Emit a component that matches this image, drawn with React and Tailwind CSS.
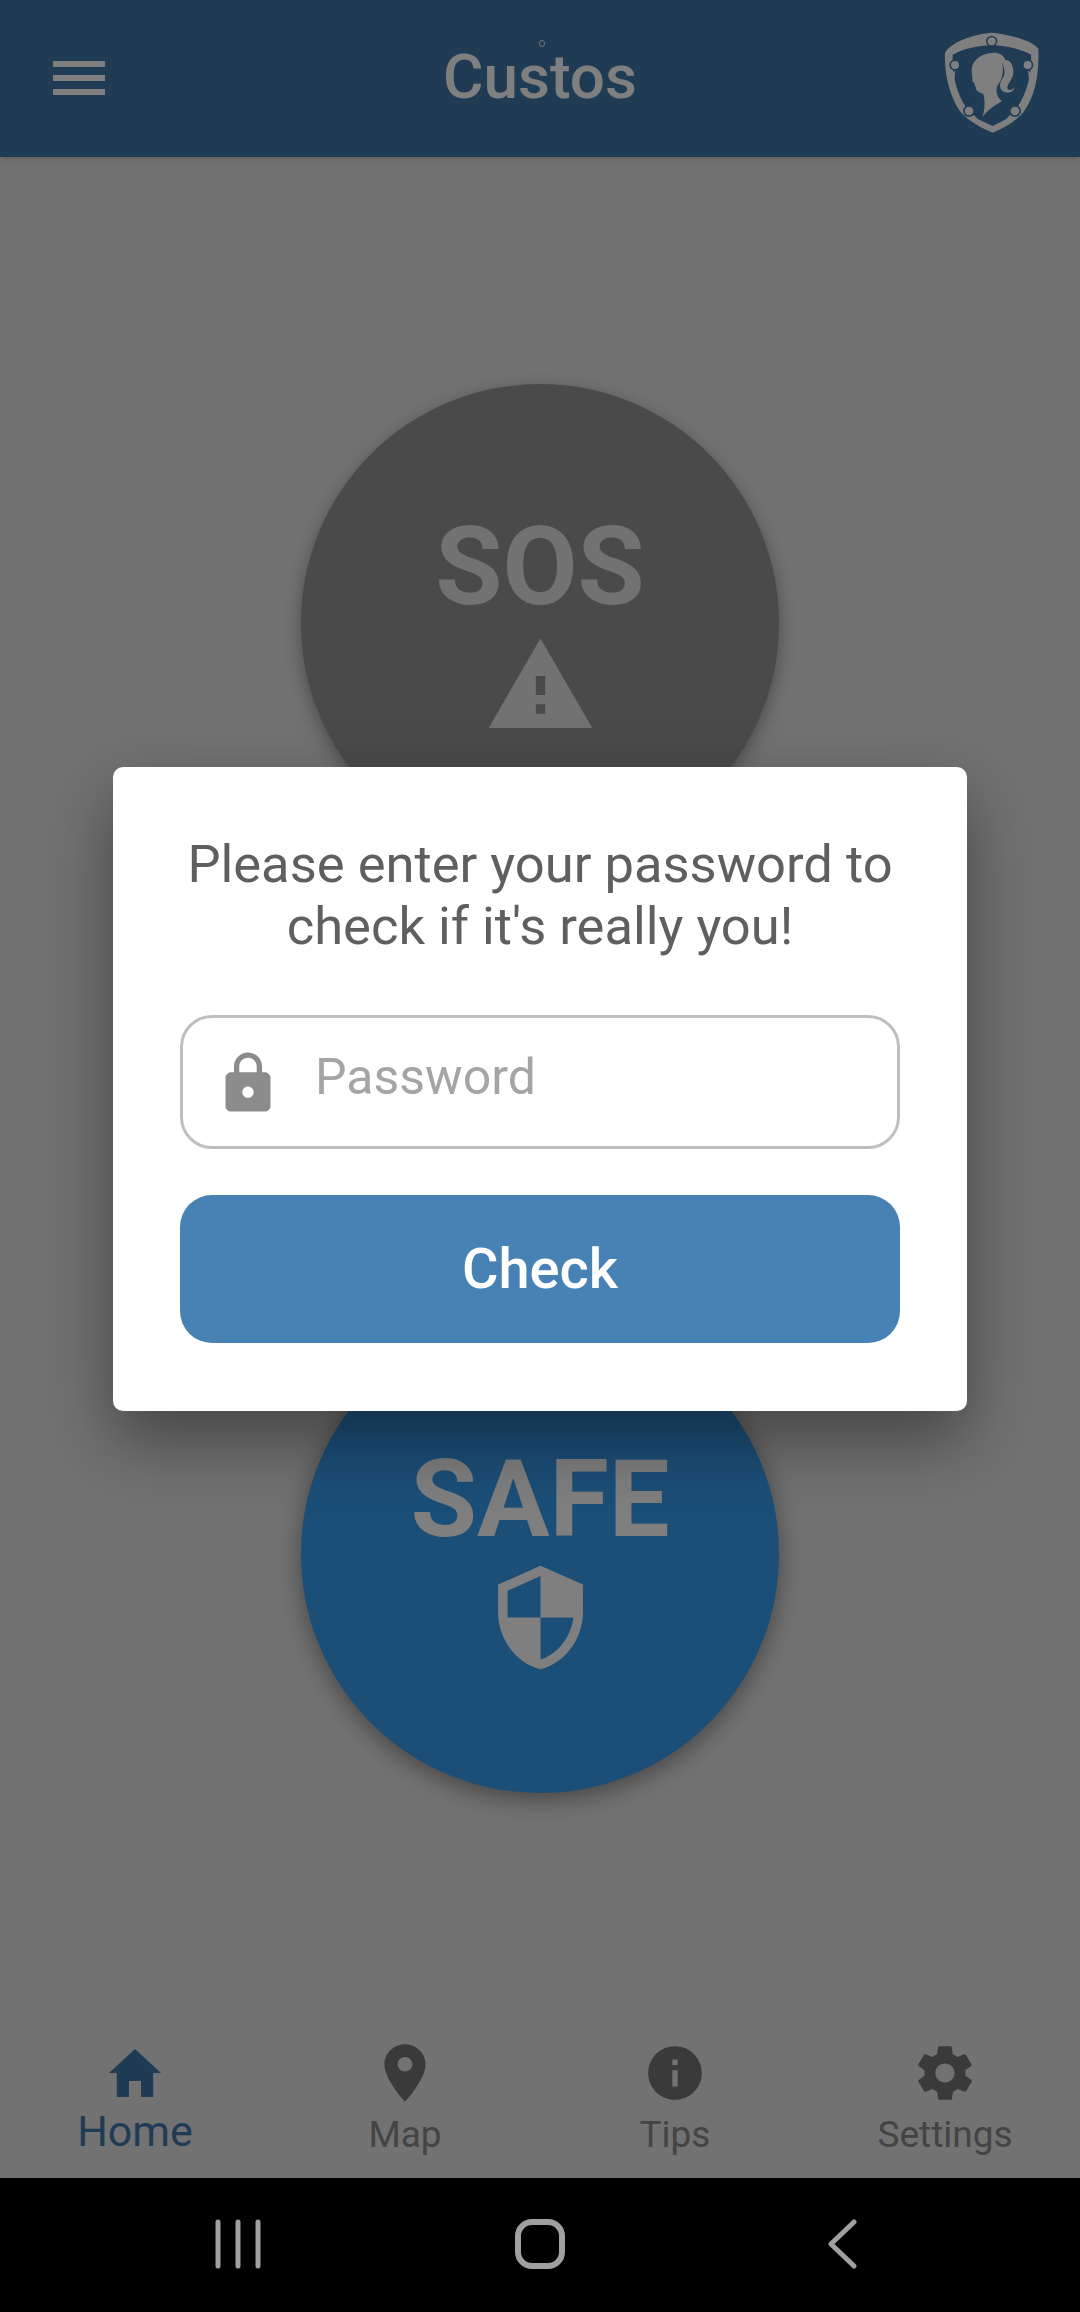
import { IoMdHome, IoMdPin, IoMdInformationCircle, IoMdSettings, IoMdLock } from "react-icons/io";
import { MdWarning, MdSecurity } from "react-icons/md";

function CustosLogo({ className }) {
  return (
    <svg viewBox="0 0 450 390" className={className} fill="#ffffff">
      {/* shield frame */}
      <path
        fillRule="evenodd"
        d="M75 118 C 85 90 150 62 215 56 C 280 62 345 85 355 105 C 358 180 345 250 310 295 C 285 325 245 345 218 356 C 190 345 150 325 122 295 C 90 250 72 180 75 118 Z M98 122 C 135 102 180 94 215 94 C 250 94 295 102 333 122 C 335 180 322 235 292 280 L 258 316 L 218 336 L 174 316 L 138 280 C 108 235 96 180 98 122 Z"
      />
      <path d="M88 190 L 106 168 L 102 205 Z M342 190 L 324 168 L 328 205 Z M118 82 L 192 74 L 118 102 Z M312 82 L 238 74 L 312 102 Z" />
      <circle cx="215" cy="82" r="17" fill="#4078aa" />
      <circle cx="215" cy="82" r="12" />
      <circle cx="105" cy="153" r="17" fill="#4078aa" />
      <circle cx="105" cy="153" r="12" />
      <circle cx="323" cy="153" r="17" fill="#4078aa" />
      <circle cx="323" cy="153" r="12" />
      <circle cx="147" cy="291" r="18" fill="#4078aa" />
      <circle cx="147" cy="291" r="13" />
      <circle cx="285" cy="291" r="18" fill="#4078aa" />
      <circle cx="285" cy="291" r="13" />
      {/* girl silhouette */}
      <path d="M156 160 C 160 135 190 115 225 116 C 240 117 252 125 256 138 C 268 136 278 150 280 170 C 282 195 262 205 262 222 C 266 232 278 228 283 220 C 282 236 262 240 248 232 C 236 222 238 205 250 190 C 256 178 254 160 246 146 C 254 175 244 200 232 215 C 226 232 232 250 246 262 C 232 270 212 280 188 308 C 194 284 196 262 190 240 C 180 236 170 232 168 224 C 168 218 162 214 164 208 C 160 204 154 200 158 194 C 156 184 154 172 156 160 Z" />
    </svg>
  );
}

function NavItem({ icon: Icon, label, active, iconClass }) {
  return (
    <div className={`flex-1 flex flex-col items-center ${active ? "text-[#4078aa]" : "text-[#747474]"}`}>
      <div className="h-[66px] flex items-center justify-center">
        <Icon className={iconClass} />
      </div>
      <span
        className={
          active
            ? "text-[43px] leading-[50px] text-[#4078aa]"
            : "text-[37px] leading-[44px] mt-[7px] text-[#888888]"
        }
      >
        {label}
      </span>
    </div>
  );
}

export default function App() {
  return (
    <div className="relative w-[1080px] h-[2312px] flex flex-col overflow-hidden bg-black font-['Roboto',sans-serif]">
      {/* Header */}
      <header className="relative h-[157px] shrink-0 flex items-center bg-[#4078aa] pl-[53px] pr-[10px] shadow-md">
        <div className="flex-1">
          <div className="w-[52px] flex flex-col gap-[8px] -mt-[1px]">
            <div className="h-[6px] bg-white" />
            <div className="h-[6px] bg-white" />
            <div className="h-[6px] bg-white" />
          </div>
        </div>
        <h1 className="text-[62px] leading-none font-medium text-white -mt-[3px] -ml-[43px]">Custos</h1>
        <div className="flex-1 flex justify-end">
          <CustosLogo className="w-[150px] h-[130px]" />
        </div>
        <span className="absolute left-[539px] top-[40px] w-[6px] h-[7px] rounded-full border border-[#d8e4f0]" />
      </header>

      {/* Main buttons */}
      <main className="flex-1 flex flex-col items-center justify-around bg-[#e4e4e4]">
        <div className="w-[478px] h-[478px] pt-[2px] rounded-full bg-[#949494] shadow-[0_6px_18px_rgba(0,0,0,0.35)] flex flex-col items-center justify-center text-[#e4e4e4]">
          <span className="text-[109px] leading-[124px] font-bold">SOS</span>
          <MdWarning className="w-[113px] h-[113px]" />
        </div>
        <div className="w-[478px] h-[478px] pt-[2px] rounded-full bg-[#389ef0] shadow-[0_6px_24px_rgba(0,0,0,0.4)] flex flex-col items-center justify-center text-white">
          <span className="text-[108px] leading-[124px] font-bold">SAFE</span>
          <MdSecurity className="w-[113px] h-[113px]" />
        </div>
      </main>

      {/* Bottom tabs */}
      <nav className="h-[158px] shrink-0 flex items-start pt-[19px] bg-[#e4e4e4] border-t border-[#dcdcdc]">
        <NavItem icon={IoMdHome} label="Home" active iconClass="w-[64px] h-[64px]" />
        <NavItem icon={IoMdPin} label="Map" iconClass="w-[66px] h-[66px]" />
        <NavItem icon={IoMdInformationCircle} label="Tips" iconClass="w-[66px] h-[66px]" />
        <NavItem icon={IoMdSettings} label="Settings" iconClass="w-[66px] h-[66px]" />
      </nav>

      {/* Android system bar */}
      <div className="h-[134px] shrink-0 bg-black flex items-center justify-center gap-[202px] pb-[3px]">
        <div className="w-[100px] flex justify-center">
          <svg width="46" height="50" viewBox="0 0 46 50" fill="none" stroke="#a0a0a0" strokeWidth="5" strokeLinecap="round">
            <path d="M3 3v44M23 3v44M43 3v44" />
          </svg>
        </div>
        <div className="w-[100px] flex justify-center">
          <svg width="50" height="50" viewBox="0 0 50 50" fill="none" stroke="#a0a0a0" strokeWidth="6">
            <rect x="3" y="3" width="44" height="44" rx="14" />
          </svg>
        </div>
        <div className="w-[100px] flex justify-center">
          <svg width="30" height="50" viewBox="0 0 30 50" fill="none" stroke="#a0a0a0" strokeWidth="5" strokeLinecap="round" strokeLinejoin="round">
            <path d="M27 3L4 25l23 22" />
          </svg>
        </div>
      </div>

      {/* Dim layer + password dialog */}
      <div className="absolute top-0 inset-x-0 h-[2178px] bg-black/50 flex items-center justify-center">
        <div className="w-[854px] bg-white rounded-[10px] px-[67px] pt-[66px] pb-[68px] shadow-[0_30px_70px_rgba(0,0,0,0.4)]">
          <p className="text-[52.5px] leading-[62px] text-center text-[#5f5f5f] whitespace-nowrap">
            Please enter your password to
            <br />
            check if it's really you!
          </p>
          <div className="mt-[58px] h-[134px] flex items-center border-[3px] border-[#bfbfbf] rounded-[32px] pl-[29px]">
            <IoMdLock className="w-[72px] h-[72px] text-[#8c8c8c]" />
            <span className="ml-[31px] -mt-[10px] text-[50px] leading-none text-[#a5a5a5]">Password</span>
          </div>
          <button className="mt-[46px] w-full h-[148px] rounded-[32px] bg-[#4882b5] text-white text-[56px] font-medium">
            Check
          </button>
        </div>
      </div>
    </div>
  );
}
